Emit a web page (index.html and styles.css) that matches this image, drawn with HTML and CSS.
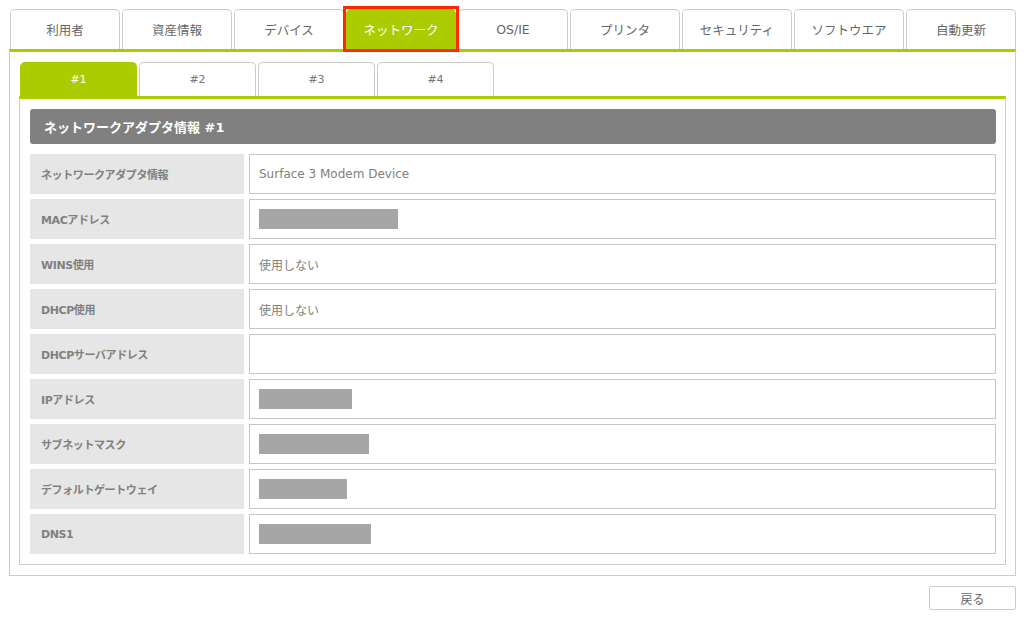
FILE: index.html
```html
<!DOCTYPE html>
<html lang="ja">
<head>
  <meta charset="UTF-8">
  <meta name="viewport" content="width=device-width, initial-scale=1">
  <title>ネットワーク</title>
  <link rel="stylesheet" href="styles.css">
</head>
<body>

<div class="page">
  <ul class="main-tabs">
    <li class="tab">利用者</li>
    <li class="tab">資産情報</li>
    <li class="tab">デバイス</li>
    <li class="tab active marked">ネットワーク</li>
    <li class="tab">OS/IE</li>
    <li class="tab">プリンタ</li>
    <li class="tab">セキュリティ</li>
    <li class="tab">ソフトウエア</li>
    <li class="tab">自動更新</li>
  </ul>

  <div class="main-panel">
    <ul class="sub-tabs">
      <li class="sub-tab active">#1</li>
      <li class="sub-tab">#2</li>
      <li class="sub-tab">#3</li>
      <li class="sub-tab">#4</li>
    </ul>

    <div class="sub-panel">
      <h3 class="section-title">ネットワークアダプタ情報 #1</h3>
      <div class="info-grid">
        <div class="label">ネットワークアダプタ情報</div>
        <div class="value">Surface 3 Modem Device</div>

        <div class="label">MACアドレス</div>
        <div class="value"><span class="mask" style="width:139px"></span></div>

        <div class="label">WINS使用</div>
        <div class="value">使用しない</div>

        <div class="label">DHCP使用</div>
        <div class="value">使用しない</div>

        <div class="label">DHCPサーバアドレス</div>
        <div class="value"></div>

        <div class="label">IPアドレス</div>
        <div class="value"><span class="mask" style="width:93px"></span></div>

        <div class="label">サブネットマスク</div>
        <div class="value"><span class="mask" style="width:110px"></span></div>

        <div class="label">デフォルトゲートウェイ</div>
        <div class="value"><span class="mask" style="width:88px"></span></div>

        <div class="label">DNS1</div>
        <div class="value"><span class="mask" style="width:112px"></span></div>
      </div>
    </div>
  </div>

  <div class="actions">
    <button class="back">戻る</button>
  </div>
</div>

</body>
</html>
```

FILE: styles.css
```css
body {
  margin: 0;
  font-family: "DejaVu Sans", "Noto Sans CJK JP", sans-serif;
  color: #666;
  background: #fff;
}
.page {
  padding: 9px 8px 0 9px;
}
.main-tabs {
  display: flex;
  gap: 2px;
  margin: 0 0 0 1px;
  padding: 0;
  list-style: none;
}
.tab {
  flex: 1;
  height: 40px;
  box-sizing: border-box;
  border: 1px solid #ccc;
  border-bottom: none;
  border-radius: 5px 5px 0 0;
  display: flex;
  align-items: center;
  justify-content: center;
  font-size: 12.5px;
  color: #666;
  background: #fff;
}
.tab.active {
  background: #aacc00;
  border-color: #aacc00;
  color: #fff;
}
/* red highlight box drawn over the selected tab */
.marked {
  position: relative;
  z-index: 1;
}
.marked::after {
  content: "";
  position: absolute;
  top: -4px;
  left: -4px;
  right: -4px;
  bottom: -3px;
  border: 3px solid #ff2a00;
}
.main-panel {
  border: 1px solid #ccc;
  border-top: 3px solid #aacc00;
  padding: 10px 9px 10px 9px;
}
.sub-tabs {
  display: flex;
  gap: 2px;
  margin: 0 0 0 1px;
  padding: 0;
  list-style: none;
}
.sub-tab {
  width: 117px;
  height: 34px;
  box-sizing: border-box;
  border: 1px solid #ccc;
  border-bottom: none;
  border-radius: 5px 5px 0 0;
  display: flex;
  align-items: center;
  justify-content: center;
  font-size: 11px;
  color: #777;
}
.sub-tab.active {
  background: #aacc00;
  border-color: #aacc00;
  color: #fff;
}
.sub-panel {
  border: 1px solid #ccc;
  border-top: 3px solid #aacc00;
  padding: 10px 9px 10px 10px;
}
.section-title {
  margin: 0 0 10px;
  height: 35px;
  padding-left: 14px;
  display: flex;
  align-items: center;
  background: #808080;
  border-radius: 3px;
  color: #fff;
  font-size: 13px;
  font-weight: bold;
}
.info-grid {
  display: grid;
  grid-template-columns: 214px 1fr;
  grid-auto-rows: 40px;
  gap: 5px;
}
.label {
  display: flex;
  align-items: center;
  padding-left: 11px;
  background: #e6e6e6;
  color: #808080;
  font-size: 11px;
  font-weight: bold;
  letter-spacing: -0.4px;
}
.value {
  display: flex;
  align-items: center;
  padding-left: 9px;
  border: 1px solid #c6c6c6;
  color: #808080;
  font-size: 12px;
}
.mask {
  display: inline-block;
  height: 20px;
  background: #a6a6a6;
}
.actions {
  display: flex;
  justify-content: flex-end;
  padding-top: 10px;
}
.back {
  width: 87px;
  height: 24px;
  border: 1px solid #ccc;
  border-radius: 2px;
  background: #fff;
  color: #666;
  font-family: inherit;
  font-size: 12px;
  cursor: pointer;
}
```
